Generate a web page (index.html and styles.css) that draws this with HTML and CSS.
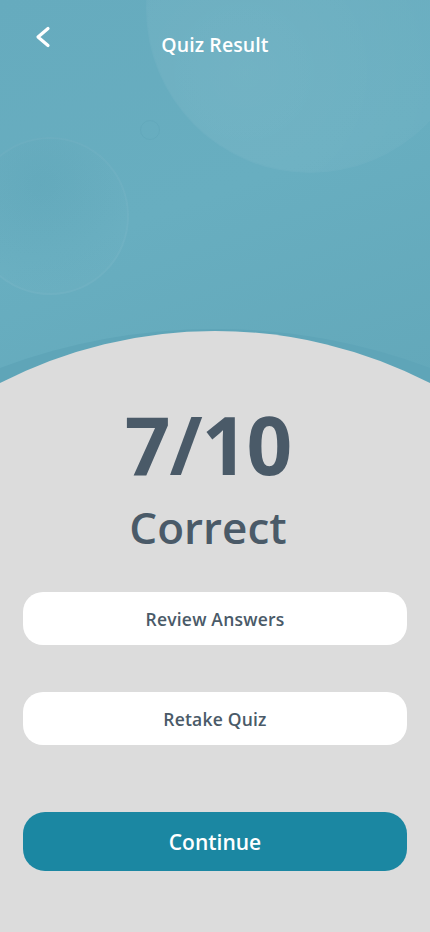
FILE: index.html
```html
<!DOCTYPE html>
<html lang="en">
<head>
<meta charset="utf-8">
<title>Quiz Result</title>
<link rel="stylesheet" href="styles.css">
</head>
<body>
<div class="screen">
  <header class="hero">
    <div class="bubble bubble-big"></div>
    <div class="bubble bubble-left"></div>
    <div class="bubble bubble-small"></div>
    <nav class="nav">
      <button class="back" aria-label="Back">
        <svg width="24" height="24" viewBox="0 0 24 24"><path d="M17 3.5 L7 12 L17 20.5" fill="none" stroke="#fff" stroke-width="3.2" stroke-linecap="round" stroke-linejoin="round"/></svg>
      </button>
      <h1 class="title">Quiz Result</h1>
      <span class="nav-spacer"></span>
    </nav>
    <svg class="arc" width="430" height="60" viewBox="0 0 430 60" preserveAspectRatio="none">
      <path d="M0 43 A612 612 0 0 1 430 43 L430 60 L0 60 Z" fill="#5fa5b8"/>
      <path d="M0 58 A470 470 0 0 1 430 58 L430 60 L0 60 Z" fill="#dcdcdc"/>
    </svg>
  </header>
  <main class="content">
    <div class="result">
      <div class="score">7/10</div>
      <div class="label">Correct</div>
    </div>
    <div class="actions">
      <button class="btn btn-light">Review Answers</button>
      <button class="btn btn-light">Retake Quiz</button>
    </div>
    <button class="btn btn-primary">Continue</button>
  </main>
</div>
</body>
</html>
```

FILE: styles.css
```css
* { box-sizing: border-box; }
html, body { margin: 0; padding: 0; }
body {
  background: #dcdcdc;
  font-family: "Open Sans", "Liberation Sans", sans-serif;
}
.screen {
  width: 430px;
  height: 932px;
  overflow: hidden;
  background: #dcdcdc;
}
.hero {
  position: relative;
  height: 385px;
  overflow: hidden;
  background: linear-gradient(160deg, #66abbe 0%, #68aec0 50%, #63a8ba 100%);
}
.bubble {
  position: absolute;
  border-radius: 50%;
}
.bubble-big {
  left: 147px;
  top: -154px;
  width: 326px;
  height: 326px;
  background: radial-gradient(circle at 30% 70%, rgba(255,255,255,0.07), rgba(255,255,255,0.02) 70%);
  box-shadow: 0 0 0 1px rgba(255,255,255,0.04);
}
.bubble-left {
  left: -29px;
  top: 137px;
  width: 158px;
  height: 158px;
  background: radial-gradient(circle at 45% 30%, rgba(80,150,170,0.15), rgba(255,255,255,0.02) 75%);
  box-shadow: inset 0 0 0 2px rgba(255,255,255,0.035);
}
.bubble-small {
  left: 140px;
  top: 120px;
  width: 20px;
  height: 20px;
  border: 1.5px solid rgba(70,140,160,0.14);
}
.nav {
  position: relative;
  display: flex;
  align-items: flex-start;
  justify-content: space-between;
  padding: 25px 31px 0 31px;
}
.back {
  width: 24px;
  height: 24px;
  padding: 0;
  border: 0;
  background: none;
  display: block;
}
.back svg { display: block; }
.title {
  margin: 8px 0 0 0;
  font-size: 19.5px;
  font-weight: 600;
  color: #fff;
  line-height: 24px;
  letter-spacing: 0.1px;
}
.nav-spacer { width: 24px; }
.arc {
  position: absolute;
  left: 0;
  bottom: 0;
  display: block;
}
.content {
  padding: 0 23px 0 23px;
  display: flex;
  flex-direction: column;
}
.result {
  display: flex;
  flex-direction: column;
  align-items: center;
  color: #4a5a68;
  padding-right: 14px;
  margin-top: 15px;
}
.score {
  font-size: 80px;
  font-weight: 700;
  line-height: 88px;
  letter-spacing: -1px;
}
.label {
  margin-top: 14px;
  font-size: 44px;
  font-weight: 600;
  line-height: 50px;
}
.actions {
  margin-top: 40px;
  display: flex;
  flex-direction: column;
  gap: 47px;
}
.btn {
  display: block;
  width: 100%;
  border: 0;
  font-family: inherit;
  text-align: center;
}
.btn-light {
  height: 53px;
  border-radius: 20px;
  background: #fff;
  color: #4a5a68;
  font-size: 17.5px;
  font-weight: 600;
  letter-spacing: 0.2px;
}
.btn-primary {
  margin-top: 67px;
  height: 59px;
  border-radius: 22px;
  background: #1b87a2;
  color: #fff;
  font-size: 21px;
  font-weight: 600;
}
```
